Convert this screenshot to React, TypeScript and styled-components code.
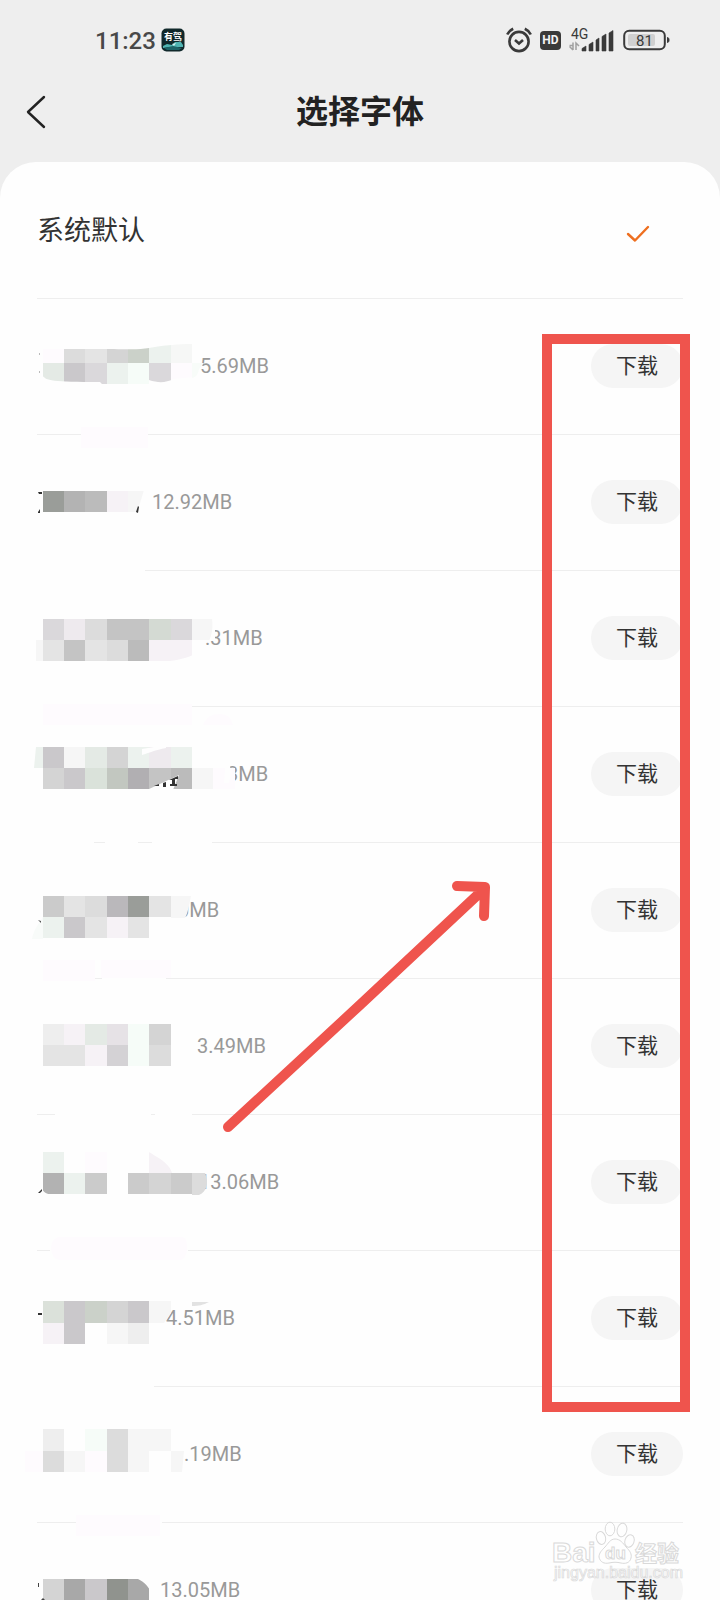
import React from "react";
import styled, { createGlobalStyle } from "styled-components";

const GlobalStyle = createGlobalStyle`
  * { box-sizing: border-box; }
  body { margin: 0; background: #eeeeee; }
`;

const sans = `Roboto, "Noto Sans CJK SC", sans-serif`;
const ink = "#3a3a3a";
const marker = "#ef544d";

const Screen = styled.div`
  position: relative;
  display: flex;
  flex-direction: column;
  height: 100vh;
  overflow: hidden;
  background: #eeeeee;
  font-family: ${sans};
`;

const StatusBar = styled.div`
  display: flex;
  align-items: center;
  justify-content: space-between;
  flex: none;
  height: 80px;
  padding: 0 49px 0 95px;
`;

const StatusGroup = styled.div<{ $gap: number }>`
  display: flex;
  align-items: center;
  gap: ${(p) => p.$gap}px;
`;

const Time = styled.span`
  font-size: 24px;
  font-weight: 500;
  line-height: 28px;
  padding-top: 2px;
  color: #484848;
`;

const HdBadge = styled.span`
  width: 21px;
  height: 19px;
  border-radius: 4px;
  background: ${ink};
  color: #f4f4f4;
  font-size: 12px;
  font-weight: 700;
  line-height: 19px;
  text-align: center;
`;

const Header = styled.header`
  display: grid;
  grid-template-columns: 60px 1fr 60px;
  align-items: center;
  flex: none;
  height: 64px;
  margin-bottom: 18px;
`;

const BackButton = styled.button`
  display: flex;
  padding: 8px 0 8px 26px;
  border: 0;
  background: none;
`;

const Title = styled.h1`
  margin: 0;
  font-size: 32px;
  font-weight: 700;
  line-height: 40px;
  text-align: center;
  color: #222222;
`;

const Card = styled.main`
  flex: 1 0 auto;
  padding: 0 37px;
  border-radius: 36px 36px 0 0;
  background: #fefefe;
`;

const FontList = styled.ul`
  margin: 0;
  padding: 0;
  list-style: none;
`;

const FontRow = styled.li<{ $first?: boolean }>`
  display: flex;
  align-items: center;
  height: ${(p) => (p.$first ? 137 : 136)}px;
  padding: ${(p) => (p.$first ? "2px 0 0" : "0 0 2px")};
  border-bottom: 1px solid #eeeeee;
`;

const FontName = styled.span`
  font-size: 27px;
  line-height: 36px;
  color: #333333;
`;

const CheckSlot = styled.span`
  display: flex;
  justify-content: center;
  width: 91px;
  margin-left: auto;
  padding-top: 6px;
`;

const Mosaic = styled.svg`
  position: relative;
  z-index: 1;
  flex: none;
  align-self: flex-start;
  height: 136px;
  overflow: visible;
`;

const Size = styled.span`
  font-size: 20px;
  line-height: 24px;
  color: #999999;
`;

const DownloadButton = styled.button`
  width: 92px;
  height: 44px;
  margin-left: auto;
  padding: 0;
  border: 0;
  border-radius: 22px;
  background: #f5f5f5;
  color: #333333;
  font-family: ${sans};
  font-size: 21px;
  line-height: 44px;
`;

const Highlight = styled.div`
  position: absolute;
  z-index: 2;
  top: 334px;
  right: 30px;
  width: 148px;
  height: 1078px;
  border: 10px solid ${marker};
`;

const Arrow = styled.svg`
  position: absolute;
  z-index: 2;
  top: 870px;
  left: 216px;
`;

const Watermark = styled.svg`
  position: absolute;
  z-index: 2;
  top: 1518px;
  right: 30px;
`;

type Cells = { y: number; col: number; colors: string[] };
type Dab = { d: string; fill: string };
type FontItem = {
  size: string;
  nameWidth: number;
  cells: Cells[];
  dabs: Dab[];
};

const LEFT = 37;
const CELL = 64 / 3;
const W = "#fefefe";
const PINK = "#fefbfe";
const box = (x: number, y: number, w: number, h: number, fill: string): Dab => ({
  d: `M${x} ${y}h${w}v${h}h${-w}z`,
  fill,
});

// Cell and dab coordinates: x from the screen edge, y from the top of the row.
const fonts: FontItem[] = [
  {
    size: "5.69MB",
    nameWidth: 163,
    cells: [
      { y: 43, col: 2, colors: [PINK, "#dcdcdc", "#e4e4e4", "#d4d4d4", "#cbd1c9", "#ecf2ee", "#f6f7f6"] },
      { y: 64, col: 2, colors: ["#e4eae5", "#cac8cb", "#dad8db", "#ecf2ee", "#f6fcf8", "#dad8db", PINK] },
    ],
    dabs: [
      { d: "M42 40H195V45C175 45 160 47 149 49C138 51 128 50 100 50L64 50H42z", fill: W },
      { d: "M42 76C46 82 52 83 100 83L103 86H42z", fill: W },
      { d: "M101 85H149V81C158 84 166 84 173 80L194 78V88H101z", fill: W },
      { d: "M192 64H204L199 70C198 76 196 78 192 79z", fill: "#f8fcf9" },
      { d: "M39 54h1v2h-1zM39 72h1v2h-1z", fill: "#bbbbbb" },
      box(81, 128, 67, 21, PINK),
    ],
  },
  {
    size: "12.92MB",
    nameWidth: 115,
    cells: [{ y: 56, col: 2, colors: ["#9a9d99", "#b3b3b3", "#bbbbbb", "#f6f2f6", "#f6f6f6"] }],
    dabs: [
      { d: "M144 55L137 78H150V55z", fill: W },
      { d: "M38 57h4v2h-3zM38 77l2 -3v4h-2zM136 77l2 -6l1 1l-1 6z", fill: "#333333" },
      box(37, 133, 108, 4, W),
    ],
  },
  {
    size: ".31MB",
    nameWidth: 168,
    cells: [
      { y: 48, col: 2, colors: ["#dad8db", "#eeeaee", "#dcdcdc", "#c4c4c4", "#c4c4c4", "#d4dad3", "#dad8db", "#f6f6f6"] },
      { y: 69, col: 2, colors: ["#e4e4e4", "#c4c4c4", "#e4e4e4", "#dcdcdc", "#bbbbbb", "#f6f2f6", "#f6f2f6"] },
    ],
    dabs: [
      box(36, 69, 7, 21, "#f6f6f6"),
      { d: "M193 84C184 88 172 90 162 91H194z", fill: W },
      { d: "M212 47C213 58 212 63 209 70H215V47z", fill: W },
      box(37, 133, 155, 4, W),
      box(43, 133, 149, 21, PINK),
      { d: "M203 154C206 146 212 143 220 143C228 143 231 147 233 154z", fill: PINK },
    ],
  },
  {
    size: "3MB",
    nameWidth: 190,
    cells: [
      { y: 40, col: 2, colors: ["#cac8cb", "#f6f6f6", "#e4eae5", "#d4d4d4", "#ecf2ee", "#eeeaee", "#ecf2ee"] },
      { y: 61, col: 2, colors: ["#d4d4d4", "#cac8cb", "#dae2da", "#c2c7c0", "#b1afb2", "#c4c4c4", "#bbbbbb", "#f6f6f6", PINK] },
    ],
    dabs: [
      { d: "M36 40H43V61H34z", fill: "#ecf2ee" },
      { d: "M142 42L166 38V41C155 43 149 46 142 48z", fill: W },
      { d: "M147 83L179 68L173 83z", fill: W },
      { d: "M154 79l5 -2v2zM163 76l3 -1v5h-3zM169 73l9 -4v3h-3v5h2v2h-7v-2h2v-4h-3z", fill: "#333333" },
      { d: "M226 50H230V59C231 64 231 68 229 76H224z", fill: W },
      box(37, 133, 57, 4, W),
      box(105, 133, 33, 4, W),
      box(152, 133, 60, 4, W),
    ],
  },
  {
    size: "0MB",
    nameWidth: 141,
    cells: [
      { y: 53, col: 2, colors: ["#cbcbcb", "#e4e4e4", "#dcdcdc", "#bab8bb", "#9a9d99", "#e4e4e4"] },
      { y: 74, col: 2, colors: ["#ecf2ee", "#cac8cb", "#e4e4e4", "#f6f2f6", "#e4e4e4"] },
    ],
    dabs: [
      { d: "M171 53H191C189 62 188 70 185 75H171z", fill: "#f6f6f6" },
      { d: "M43 74V96H32C34 86 38 82 43 74z", fill: "#f8fbf9" },
      { d: "M38 77l3 1v2z", fill: "#555555" },
      box(37, 133, 57, 4, W),
      box(102, 133, 64, 4, W),
      box(43, 117, 52, 21, PINK),
      box(101, 117, 70, 18, PINK),
    ],
  },
  {
    size: "3.49MB",
    nameWidth: 160,
    cells: [
      { y: 45, col: 2, colors: ["#eeeeee", "#f6f2f6", "#e4eae5", "#e6e2e6", "#f6fcf8", "#d4d4d4"] },
      { y: 66, col: 2, colors: ["#e4e4e4", "#e4e4e4", "#f6f2f6", "#d4d2d5", "#f6fcf8", "#dcdcdc"] },
    ],
    dabs: [box(55, 133, 96, 4, W), box(155, 133, 37, 4, W)],
  },
  {
    size: "13.06MB",
    nameWidth: 162,
    cells: [
      { y: 37, col: 2, colors: ["#ecf2ee", W, PINK] },
      { y: 58, col: 2, colors: ["#b2b2b2", "#ecf2ee", "#cbcbcb", W, "#cbcbcb", "#d4d4d4", "#cbcbcb"] },
    ],
    dabs: [
      { d: "M149 37L157 42C164 46 170 51 172 58H149z", fill: "#f6f2f6" },
      { d: "M192 58H205C209 67 207 77 199 80H192z", fill: "#dcdcdc" },
      { d: "M42 74C44 78 48 79 52 80H42z", fill: W },
      { d: "M38 78L42 74V76L40 78z", fill: "#333333" },
      box(50, 133, 138, 4, W),
      { d: "M58 122H182C189 122 189 145 180 145H60C50 145 47 126 58 122z", fill: PINK },
    ],
  },
  {
    size: "4.51MB",
    nameWidth: 129,
    cells: [
      { y: 50, col: 2, colors: ["#dbe1da", "#cac8cb", "#cbd1c9", "#d4d4d4", "#cac8cb"] },
      { y: 72, col: 2, colors: ["#f6f2f6", "#cac8cb", W, "#f6f6f6", "#eeeeee"] },
    ],
    dabs: [
      { d: "M149 50H171V62L164 72H149z", fill: "#f6f6f6" },
      { d: "M192 51H209C203 54 199 55 192 55z", fill: "#e2e2e2" },
      box(38, 62, 4, 2, "#333333"),
      box(37, 133, 117, 4, W),
    ],
  },
  {
    size: ".19MB",
    nameWidth: 147,
    cells: [
      { y: 42, col: 2, colors: ["#eeeeee", W, "#f6fcf8", "#dcdcdc", "#f6f6f6", "#f6f6f6"] },
      { y: 64, col: 2, colors: ["#dcdcdc", "#f6f6f6", PINK, "#dcdcdc", "#f6f6f6"] },
    ],
    dabs: [
      box(25, 64, 18, 21, PINK),
      { d: "M171 64H184L182 85H171z", fill: "#f6f6f6" },
      box(76, 133, 86, 4, W),
      box(76, 128, 84, 21, PINK),
    ],
  },
  {
    size: "13.05MB",
    nameWidth: 123,
    cells: [{ y: 56, col: 2, colors: ["#d4d4d4", "#a8a8a8", "#cac8cb", "#90938e", "#a8a8a8"] }],
    dabs: [
      { d: "M136 55C143 58 147 62 150 67V55z", fill: W },
      { d: "M38 60h1v4h-1zM41 77l2 -2l2 2z", fill: "#444444" },
    ],
  },
];

function HiddenName({ item }: { item: FontItem }) {
  return (
    <Mosaic width={item.nameWidth} aria-hidden="true">
      <g transform={`translate(${-LEFT} 0)`}>
        {item.cells.map((row, r) =>
          row.colors.map((fill, i) => {
            const x = Math.round((row.col + i) * CELL);
            const next = Math.round((row.col + i + 1) * CELL);
            const below = item.cells[r + 1];
            const height = below ? below.y - row.y : 21;
            return <rect key={`${row.y}-${i}`} x={x} y={row.y} width={next - x} height={height} fill={fill} />;
          })
        )}
        {item.dabs.map((dab, i) => (
          <path key={i} d={dab.d} fill={dab.fill} />
        ))}
      </g>
    </Mosaic>
  );
}

function AppBadge() {
  return (
    <svg width="24" height="24" viewBox="0 0 24 24">
      <rect x="0.5" y="0.5" width="23" height="23" rx="5" fill="#10282b" />
      <path d="M2 18L6 16L11 17L14 14L20 14L22 17V19L16 19L9 19L2 20z" fill="#4fb4b2" />
      <path d="M3 20L12 18L21 20L18 22H6z" fill="#1d6367" />
      <path d="M11 16l4 -1l-2 3z" fill="#d5f3f1" />
      <text x="12" y="12" fontSize="9" fontWeight="700" textAnchor="middle" fill="#ffffff" fontFamily="Noto Sans CJK SC, sans-serif">
        有驾
      </text>
    </svg>
  );
}

function AlarmIcon() {
  return (
    <svg width="26" height="26" viewBox="0 0 26 26" fill="none" stroke={ink} strokeWidth="2.6">
      <circle cx="13" cy="14.5" r="9.6" />
      <path d="M9 13L13 16.5L17 13" />
      <path d="M1.2 7.5C2.5 5 4.5 3 7.2 1.8M24.8 7.5C23.5 5 21.5 3 18.8 1.8" />
    </svg>
  );
}

function SignalIcon() {
  return (
    <svg width="46" height="26" viewBox="0 0 46 26">
      <text x="2" y="12" fontSize="14" fill={ink} fontFamily="Roboto, sans-serif">
        4G
      </text>
      <path d="M0.500 18.500H4V15.500M4 15.500V23M4 23L0.500 19.500M7 23V16L10 19" fill="none" stroke="#a0a0a0" strokeWidth="1.500" />
      <path
        d="M13 24V21.500L17 19V24zM20 24V17.500L24 15V24zM27 24V13L30 11V24zM33 24V9.500L37 7V24zM40 24V6L44 3.500V24z"
        fill={ink}
        stroke={ink}
        strokeWidth="0.600"
        strokeLinejoin="round"
      />
    </svg>
  );
}

function BatteryIcon() {
  return (
    <svg width="48" height="22" viewBox="0 0 48 22">
      <rect x="1.200" y="1.800" width="40.600" height="18.400" rx="5" fill="none" stroke={ink} strokeWidth="2" />
      <rect x="5" y="5" width="27" height="12" rx="2" fill="#d0d0d0" />
      <path d="M44.500 8.500C46.500 8.500 46.500 13.500 44.500 13.500z" fill={ink} stroke={ink} />
      <text x="21.500" y="16.500" fontSize="15" textAnchor="middle" fill={ink} fontFamily="Roboto, sans-serif">
        81
      </text>
    </svg>
  );
}

function BaiduMark() {
  const outline = { fill: "#ffffff", stroke: "#d6d6d6", strokeWidth: 1 };
  return (
    <Watermark width="140" height="70" viewBox="0 0 140 70" opacity="0.9">
      <g {...outline} transform="translate(20 0)">
        <ellipse cx="31" cy="20" rx="4.600" ry="6.500" transform="rotate(-14 31 20)" />
        <ellipse cx="40" cy="11" rx="4.800" ry="6.800" />
        <ellipse cx="52" cy="12" rx="4.800" ry="6.800" transform="rotate(12 52 12)" />
        <ellipse cx="59.500" cy="23" rx="4.600" ry="6.300" transform="rotate(18 59.500 23)" />
        <path d="M45 21C50 21 53 25 56 29C60 33 62 36 61 40C60 45 55 46 51 45C47 44 43 44 39 45C34 46 30 44 29 39C29 35 32 32 35 29C38 26 40 21 45 21z" />
      </g>
      <g {...outline} fontFamily="Liberation Sans, sans-serif" fontWeight="700">
        <text x="2" y="44" fontSize="28">Bai</text>
        <text x="55" y="41" fontSize="17">du</text>
        <text x="85" y="43" fontSize="22" fontFamily="Noto Sans CJK SC, sans-serif">经验</text>
      </g>
      <text x="4" y="60" fontSize="16" fontFamily="Liberation Sans, sans-serif" fill="#ffffff" stroke="#d6d6d6" strokeWidth="0.700">
        jingyan.baidu.com
      </text>
    </Watermark>
  );
}

export default function App() {
  return (
    <Screen>
      <GlobalStyle />
      <StatusBar>
        <StatusGroup $gap={5}>
          <Time>11:23</Time>
          <AppBadge />
        </StatusGroup>
        <StatusGroup $gap={8}>
          <AlarmIcon />
          <HdBadge>HD</HdBadge>
          <SignalIcon />
          <BatteryIcon />
        </StatusGroup>
      </StatusBar>
      <Header>
        <BackButton type="button" aria-label="返回">
          <svg width="20" height="34" viewBox="0 0 20 34" fill="none" stroke="#222222" strokeWidth="2.400" strokeLinecap="round" strokeLinejoin="round">
            <path d="M18 2L2 17L18 32" />
          </svg>
        </BackButton>
        <Title>选择字体</Title>
      </Header>
      <Card>
        <FontList>
          <FontRow $first aria-current="true">
            <FontName>系统默认</FontName>
            <CheckSlot>
              <svg width="24" height="18" viewBox="0 0 24 18" fill="none" stroke="#ee6f20" strokeWidth="2.400" strokeLinecap="round" strokeLinejoin="round">
                <path d="M2 9L9 15.500L22 2" />
              </svg>
            </CheckSlot>
          </FontRow>
          {fonts.map((item, i) => (
            <FontRow key={i}>
              <HiddenName item={item} />
              <Size>{item.size}</Size>
              <DownloadButton type="button">下载</DownloadButton>
            </FontRow>
          ))}
        </FontList>
      </Card>
      <Highlight />
      <Arrow width="284" height="268" viewBox="0 0 284 268" fill="none" stroke={marker} strokeWidth="10" strokeLinecap="round" strokeLinejoin="round" aria-hidden="true">
        <path d="M12 257L145 134L269 18M241 16L269 17L268 46" />
      </Arrow>
      <BaiduMark />
    </Screen>
  );
}
